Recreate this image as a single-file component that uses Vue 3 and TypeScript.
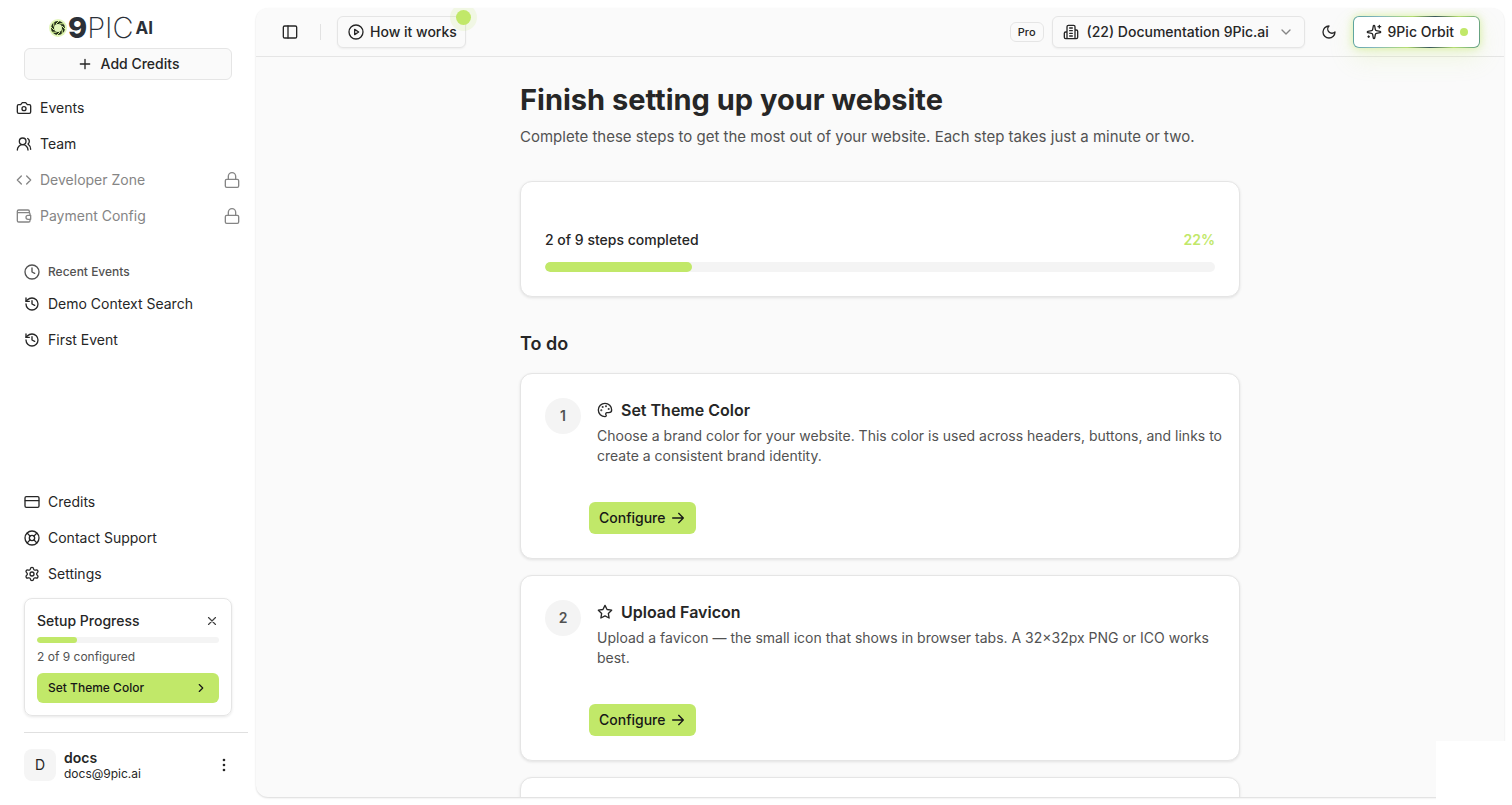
<script setup lang="ts">
import { ref } from 'vue'

interface Item { label: string; icon: string; locked?: boolean }
interface Step { title: string; icon: string; text: string }

const icons: Record<string, string> = {
  plus: '<path d="M5 12h14M12 5v14"/>',
  camera: '<path d="M14.5 4h-5L7 7H4a2 2 0 0 0-2 2v9a2 2 0 0 0 2 2h16a2 2 0 0 0 2-2V9a2 2 0 0 0-2-2h-3z"/><circle cx="12" cy="13" r="3"/>',
  team: '<path d="M18 21a8 8 0 0 0-16 0"/><circle cx="10" cy="8" r="5"/><path d="M22 20c0-3.37-2-6.5-4-8a5 5 0 0 0-.45-8.3"/>',
  code: '<path d="m16 18 6-6-6-6M8 6l-6 6 6 6"/>',
  wallet: '<path d="M20 7V5a2 2 0 0 0-2-2H4a2 2 0 0 0-2 2v14a2 2 0 0 0 2 2h15a2 2 0 0 0 2-2v-2M2 7h17a2 2 0 0 1 2 2v2"/><path d="M22 11h-4a3 3 0 0 0 0 6h4z"/>',
  lock: '<rect x="2" y="11" width="20" height="12" rx="2"/><path d="M6.500 11V6.500a5.500 5.500 0 0 1 11 0V11"/>',
  clock: '<circle cx="12" cy="12" r="10.500"/><path d="M12 6v6l4 2"/>',
  history: '<path d="M3 12a9 9 0 1 0 9-9 9.750 9.750 0 0 0-6.740 2.740L3 8"/><path d="M3 3v5h5M12 7v5l4 2"/>',
  card: '<rect x="1.500" y="4" width="21" height="16" rx="2"/><path d="M2 10h20"/>',
  support: '<circle cx="12" cy="12" r="10.500"/><circle cx="12" cy="12" r="4"/><path d="m4.930 4.930 4.240 4.240M14.830 9.170l4.240-4.240M14.830 14.830l4.240 4.240M9.170 14.830l-4.240 4.240"/>',
  settings: '<path d="M9.671 4.136a2.340 2.340 0 0 1 4.659 0 2.340 2.340 0 0 0 3.319 1.915 2.340 2.340 0 0 1 2.330 4.033 2.340 2.340 0 0 0 0 3.831 2.340 2.340 0 0 1-2.330 4.033 2.340 2.340 0 0 0-3.319 1.915 2.340 2.340 0 0 1-4.659 0 2.340 2.340 0 0 0-3.320-1.915 2.340 2.340 0 0 1-2.330-4.033 2.340 2.340 0 0 0 0-3.831A2.340 2.340 0 0 1 6.350 6.051a2.340 2.340 0 0 0 3.319-1.915"/><circle cx="12" cy="12" r="3"/>',
  close: '<path d="M18 6 6 18M6 6l12 12"/>',
  right: '<path d="m9 18 6-6-6-6"/>',
  down: '<path d="m6 9 6 6 6-6"/>',
  dots: '<circle cx="12" cy="4.500" r="1"/><circle cx="12" cy="12" r="1"/><circle cx="12" cy="19.500" r="1"/>',
  panel: '<rect x="2" y="3" width="20" height="18" rx="2"/><path d="M9 3v18"/>',
  play: '<circle cx="12" cy="12" r="10.500"/><path d="m10 8 6 4-6 4z"/>',
  building: '<path d="M6 22V4a2 2 0 0 1 2-2h8a2 2 0 0 1 2 2v18zM6 12H4a2 2 0 0 0-2 2v6a2 2 0 0 0 2 2h2M18 9h2a2 2 0 0 1 2 2v9a2 2 0 0 1-2 2h-2M10 6h4M10 10h4M10 14h4M10 18h4"/>',
  moon: '<path d="M12 3a6 6 0 0 0 9 9 9 9 0 1 1-9-9z"/>',
  sparkles: '<path d="M11.017 2.814a1 1 0 0 1 1.966 0l1.051 5.558a2 2 0 0 0 1.594 1.594l5.558 1.051a1 1 0 0 1 0 1.966l-5.558 1.051a2 2 0 0 0-1.594 1.594l-1.051 5.558a1 1 0 0 1-1.966 0l-1.051-5.558a2 2 0 0 0-1.594-1.594l-5.558-1.051a1 1 0 0 1 0-1.966l5.558-1.051a2 2 0 0 0 1.594-1.594zM20 2v4M22 4h-4M4 18v2M5 19H3"/>',
  palette: '<path d="M12 22a10 10 0 1 1 10-10c0 2.800-2.200 4-4.500 4H15a2 2 0 0 0-1.500 3.300c.9 1.100.2 2.700-1.500 2.700z"/><g fill="currentColor"><circle cx="13.500" cy="6.500" r=".5"/><circle cx="17.500" cy="10.500" r=".5"/><circle cx="8.500" cy="7.500" r=".5"/><circle cx="6.500" cy="12.500" r=".5"/></g>',
  star: '<path d="m12 2 3.090 6.260L22 9.270l-5 4.870 1.180 6.880L12 17.770l-6.180 3.250L7 14.140 2 9.270l6.910-1.010z"/>',
  arrow: '<path d="M4 12h16M13 5l7 7-7 7"/>',
}

const mainNav: Item[] = [
  { label: 'Events', icon: 'camera' },
  { label: 'Team', icon: 'team' },
  { label: 'Developer Zone', icon: 'code', locked: true },
  { label: 'Payment Config', icon: 'wallet', locked: true },
]
const recent: Item[] = [
  { label: 'Demo Context Search', icon: 'history' },
  { label: 'First Event', icon: 'history' },
]
const footerNav: Item[] = [
  { label: 'Credits', icon: 'card' },
  { label: 'Contact Support', icon: 'support' },
  { label: 'Settings', icon: 'settings' },
]
const steps: Step[] = [
  { title: 'Set Theme Color', icon: 'palette', text: 'Choose a brand color for your website. This color is used across headers, buttons, and links to create a consistent brand identity.' },
  { title: 'Upload Favicon', icon: 'star', text: 'Upload a favicon — the small icon that shows in browser tabs. A 32×32px PNG or ICO works best.' },
]
const percent = 22
const showSetup = ref(true)
const workspace = ref('docs')
</script>

<template>
  <div class="app">
    <aside class="sidebar">
      <a class="logo" href="#" aria-label="9PIC AI">
        <svg class="aperture" viewBox="0 0 20 20" aria-hidden="true">
          <circle cx="10" cy="10" r="9" fill="#e4f7bd" />
          <circle cx="10" cy="10" r="5.500" fill="none" stroke="#24301c" stroke-width="3" />
          <g stroke="#d3f08f" stroke-width="1">
            <path v-for="n in 8" :key="n" d="M8 6 11.500 2.500" :transform="`rotate(${n * 45} 10 10)`" />
          </g>
        </svg>
        <span class="nine">9</span><span class="pic">PIC</span><span class="ai">AI</span>
      </a>
      <button class="add"><svg class="icon" viewBox="0 0 24 24" v-html="icons.plus" />Add Credits</button>
      <nav class="nav" aria-label="Main">
        <a v-for="i in mainNav" :key="i.label" href="#" class="item" :class="{ locked: i.locked }">
          <svg class="icon" viewBox="0 0 24 24" v-html="icons[i.icon]" />{{ i.label }}
          <svg v-if="i.locked" class="icon lock" viewBox="0 0 24 24" v-html="icons.lock" />
        </a>
      </nav>
      <h2 class="recent-title"><svg class="icon" viewBox="0 0 24 24" v-html="icons.clock" />Recent Events</h2>
      <nav class="nav inset" aria-label="Recent events">
        <a v-for="i in recent" :key="i.label" href="#" class="item"><svg class="icon" viewBox="0 0 24 24" v-html="icons[i.icon]" />{{ i.label }}</a>
      </nav>
      <nav class="nav inset bottom" aria-label="Account">
        <a v-for="i in footerNav" :key="i.label" href="#" class="item"><svg class="icon" viewBox="0 0 24 24" v-html="icons[i.icon]" />{{ i.label }}</a>
      </nav>
      <section v-if="showSetup" class="setup">
        <div class="setup-head">
          <h2>Setup Progress</h2>
          <button class="plain" aria-label="Dismiss" @click="showSetup = false"><svg class="icon small" viewBox="0 0 24 24" v-html="icons.close" /></button>
        </div>
        <div class="bar thin" role="progressbar" aria-label="Setup progress" :aria-valuenow="percent"><div class="fill" :style="{ width: percent + '%' }" /></div>
        <p>2 of 9 configured</p>
        <button class="setup-btn">Set Theme Color<svg class="icon small" viewBox="0 0 24 24" v-html="icons.right" /></button>
      </section>
      <div class="user">
        <span class="avatar">D</span>
        <div class="who"><strong>docs</strong><span>docs@9pic.ai</span></div>
        <button class="plain more" aria-label="Account menu"><svg class="icon" viewBox="0 0 24 24" v-html="icons.dots" /></button>
      </div>
    </aside>

    <div class="panel">
      <header class="top">
        <button class="plain square" aria-label="Toggle sidebar"><svg class="icon" viewBox="0 0 24 24" v-html="icons.panel" /></button>
        <span class="divider" />
        <button class="outline how"><svg class="icon" viewBox="0 0 24 24" v-html="icons.play" />How it works<span class="ping" /></button>
        <span class="badge">Pro</span>
        <div class="outline picker">
          <svg class="icon" viewBox="0 0 24 24" v-html="icons.building" />
          <select v-model="workspace" aria-label="Workspace"><option value="docs">(22) Documentation 9Pic.ai</option></select>
          <svg class="icon chevron" viewBox="0 0 24 24" v-html="icons.down" />
        </div>
        <button class="plain square" aria-label="Toggle theme"><svg class="icon" viewBox="0 0 24 24" v-html="icons.moon" /></button>
        <button class="orbit"><svg class="icon" viewBox="0 0 24 24" v-html="icons.sparkles" />9Pic Orbit<span class="dot" /></button>
      </header>
      <main class="scroll">
        <div class="content">
          <h1>Finish setting up your website</h1>
          <p class="lead">Complete these steps to get the most out of your website. Each step takes just a minute or two.</p>
          <section class="card progress">
            <div class="progress-text"><span>2 of 9 steps completed</span><span class="pct">{{ percent }}%</span></div>
            <div class="bar" role="progressbar" aria-label="Steps completed" :aria-valuenow="percent"><div class="fill" :style="{ width: percent + '%' }" /></div>
          </section>
          <h2 class="todo">To do</h2>
          <div class="steps">
            <article v-for="(s, n) in steps" :key="s.title" class="card">
              <div class="step">
                <span class="num">{{ n + 1 }}</span>
                <div>
                  <h3><svg class="icon" viewBox="0 0 24 24" v-html="icons[s.icon]" />{{ s.title }}</h3>
                  <p>{{ s.text }}</p>
                </div>
              </div>
              <button class="configure">Configure<svg class="icon" viewBox="0 0 24 24" v-html="icons.arrow" /></button>
            </article>
            <article class="card upcoming" />
          </div>
        </div>
      </main>
    </div>
    <div class="corner" />
  </div>
</template>

<style>
body { margin: 0; background: #fff; }
</style>

<style scoped>
.app, .app * { box-sizing: border-box; }
.app { display: flex; height: 100vh; overflow: hidden; color: #262626; background: #fff; font: 400 14px/20px Inter, "Liberation Sans", sans-serif; }
h1, h2, h3, p { margin: 0; }
a { color: inherit; text-decoration: none; }
button, select { font: inherit; color: inherit; cursor: pointer; }
.icon { flex: none; width: 16px; height: 16px; fill: none; stroke: currentColor; stroke-width: 2; stroke-linecap: round; stroke-linejoin: round; }
.icon.small { width: 14px; height: 14px; }
.plain { display: flex; align-items: center; justify-content: center; padding: 0; border: 0; background: none; }

.sidebar { flex: none; display: flex; flex-direction: column; width: 256px; padding: 8px 8px 24px 16px; }
.logo { display: flex; align-items: center; height: 40px; margin-left: 32px; color: #2b3038; line-height: 40px; }
.aperture { width: 20px; height: 20px; }
.nine { font-size: 29px; font-weight: 800; }
.pic { font-size: 29px; font-weight: 200; }
.ai { align-self: flex-start; margin-left: 2px; font-size: 17px; font-weight: 700; }
.add { display: flex; align-items: center; justify-content: center; gap: 8px; height: 32px; margin: 0 16px 0 8px; border: 1px solid #e5e5e5; border-radius: 6px; background: #fafafa; font-weight: 500; }
.nav { display: flex; flex-direction: column; gap: 4px; margin-top: 12px; }
.nav.inset { margin-top: 0; padding-left: 8px; }
.nav.bottom { margin-top: auto; }
.item { display: flex; align-items: center; gap: 8px; height: 32px; }
.item.locked { color: #858585; }
.lock { margin-left: auto; margin-right: 8px; }
.recent-title { display: flex; align-items: center; gap: 8px; height: 32px; margin-top: 24px; padding-left: 8px; color: #525252; font-size: 12px; font-weight: 500; }
.setup { display: flex; flex-direction: column; margin: 8px 16px 0 8px; padding: 12px; border: 1px solid #e5e5e5; border-radius: 8px; box-shadow: 0 1px 3px #0000001a; }
.setup-head { display: flex; align-items: center; justify-content: space-between; }
.setup h2 { font-size: 14px; font-weight: 500; }
.setup-head .plain { color: #404040; }
.setup p { margin: 6px 0 8px; color: #525252; font-size: 12px; line-height: 16px; }
.setup-btn { display: flex; align-items: center; justify-content: space-between; height: 30px; padding: 0 11px; border: 0; border-radius: 6px; background: #c1e869; color: #171717; font-size: 12px; font-weight: 500; }
.bar { height: 10px; border-radius: 5px; background: #f4f4f4; overflow: hidden; }
.bar.thin { height: 6px; margin-top: 6px; }
.fill { height: 100%; border-radius: 5px; background: #c1e869; }
.user { display: flex; align-items: center; gap: 8px; margin: 16px 0 0 8px; padding-top: 16px; border-top: 1px solid #e0e0e0; }
.avatar { display: grid; place-items: center; width: 32px; height: 32px; border-radius: 8px; background: #f5f5f5; }
.who { display: flex; flex-direction: column; }
.who strong { font-weight: 600; line-height: 18px; }
.who span { font-size: 12px; line-height: 14px; }
.more { margin-left: auto; margin-right: 16px; }

.panel { flex: 1; min-width: 0; display: flex; flex-direction: column; margin: 8px 8px 8px 0; overflow: clip; border-radius: 12px; background: #fafafa; box-shadow: 0 1px 2px #00000026; }
.top { position: relative; z-index: 1; display: flex; align-items: center; gap: 8px; height: 49px; flex: none; padding: 0 24px 0 18px; border-bottom: 1px solid #e5e5e5; }
.square { width: 32px; height: 32px; }
.divider { width: 1px; height: 16px; margin: 0 8px 0 6px; background: #e2e2e2; }
.outline { display: flex; align-items: center; height: 32px; border: 1px solid #e5e5e5; border-radius: 6px; background: #fafafa; font-weight: 500; box-shadow: 0 1px 2px #0000000d; }
.how { position: relative; gap: 6px; margin-right: auto; padding: 0 8px 0 10px; }
.ping { position: absolute; top: -7px; right: -6px; width: 15px; height: 15px; border-radius: 50%; background: #c1e869; box-shadow: 0 0 0 6px #c1e86926; }
.badge { padding: 1px 7px; border: 1px solid #e5e5e5; border-radius: 6px; font-size: 11px; font-weight: 500; line-height: 16px; }
.picker { gap: 8px; padding: 0 10px; }
.picker select { appearance: none; padding: 0; border: 0; background: none; font-weight: 500; }
.chevron { color: #858585; }
.orbit { display: flex; align-items: center; gap: 6px; height: 32px; padding: 0 11px 0 12px; border: 1px solid transparent; border-radius: 6px; background: linear-gradient(#fff, #fff) padding-box, linear-gradient(100deg, #5aa39b, #83b6c0 20%, #b4de72 45%, #39575c 62%, #b4de72 80%, #5e9b83) border-box; box-shadow: 0 0 8px #c1e86999, 0 10px 24px #c1e8692e; font-weight: 500; }
.dot { width: 8px; height: 8px; border-radius: 50%; background: #c1e869; }

.scroll { flex: 1; min-height: 0; overflow: hidden; padding: 24px; }
.content { max-width: 720px; margin: 0 auto; }
h1 { font-size: 29px; line-height: 38px; font-weight: 700; }
.lead { margin-top: 6px; color: #525252; font-size: 15px; line-height: 24px; }
.card { padding: 24px; border: 1px solid #e5e5e5; border-radius: 12px; background: #fff; box-shadow: 0 1px 3px #0000001a; }
.progress { margin-top: 32px; padding-top: 48px; }
.progress-text { display: flex; justify-content: space-between; margin-bottom: 12px; font-weight: 500; }
.pct { color: #c1e869; font-weight: 600; }
.todo { margin: 32px 0 14px; font-size: 18px; line-height: 30px; font-weight: 600; }
.steps { display: flex; flex-direction: column; gap: 16px; }
.step { display: flex; gap: 16px; margin-right: -12px; }
.num { flex: none; display: grid; place-items: center; width: 36px; height: 36px; border-radius: 50%; background: #f4f4f4; color: #525252; font-weight: 600; }
h3 { display: flex; align-items: center; gap: 8px; font-size: 16px; line-height: 24px; font-weight: 600; }
.step p { margin-top: 4px; color: #525252; }
.configure { display: flex; align-items: center; gap: 4px; height: 32px; margin: 36px 0 0 44px; padding: 0 10px; border: 0; border-radius: 6px; background: #c1e869; color: #171717; font-weight: 500; }
.upcoming { height: 186px; }
.corner { position: absolute; right: 0; bottom: 0; z-index: 2; width: 76px; height: 64px; background: #fff; }
</style>
